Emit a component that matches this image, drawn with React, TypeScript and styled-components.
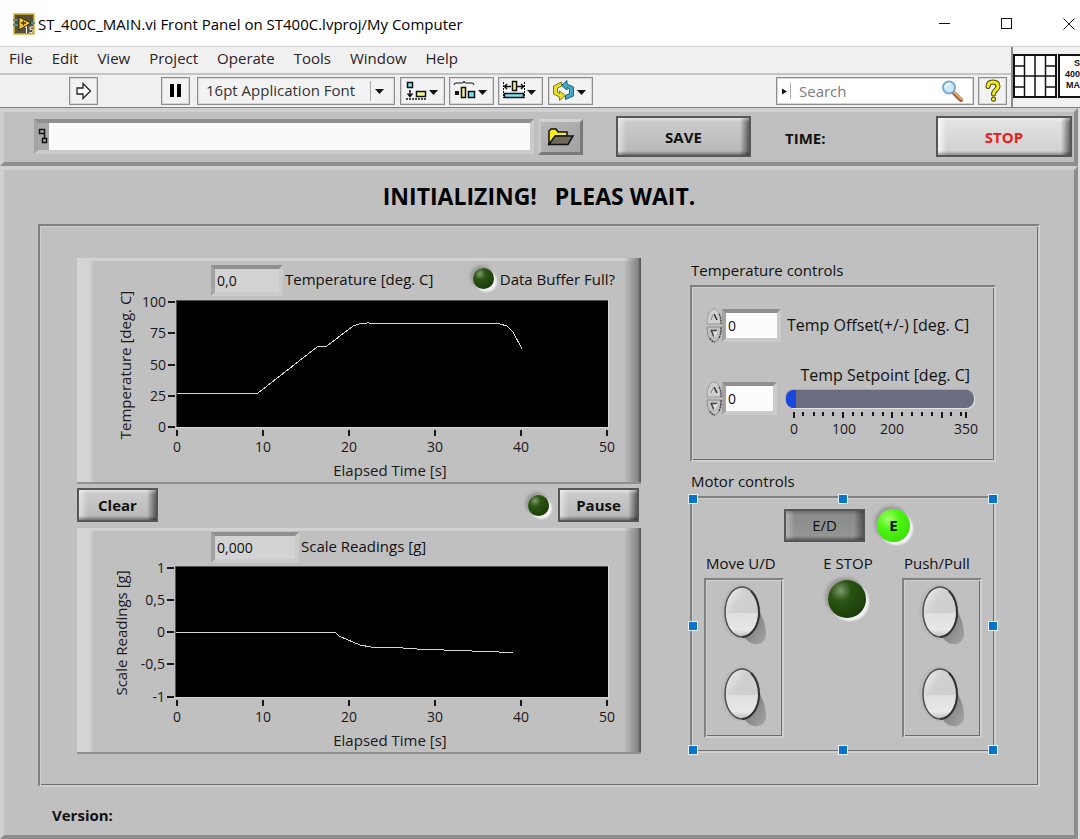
import React, { useState } from 'react';
import styled, { createGlobalStyle, css } from 'styled-components';

const GlobalStyle = createGlobalStyle`
  *, *::before, *::after { box-sizing: border-box; }
  body {
    margin: 0;
    background: #dcdcdc;
    color: #111;
    font: 15px/20px "Open Sans", "Noto Sans", sans-serif;
    overflow-x: hidden;
  }
  button, input, select { font: inherit; color: inherit; }
  h1, p { margin: 0; }
`;

/* ---------- window chrome ---------- */

const Window = styled.div`
  display: flex;
  flex-direction: column;
  min-height: 100vh;
  overflow: hidden;
`;

const TitleBar = styled.header`
  display: flex;
  align-items: center;
  height: 47px;
  padding: 2px 0 0 13px;
  background: #fff;
  border-bottom: 1px solid #d2d2d2;
  gap: 3px;
`;

const WindowTitle = styled.p`
  flex: 1;
  color: #000;
  white-space: nowrap;
`;

const WindowControls = styled.div`
  display: flex;
  gap: 40px;
`;

const PlainButton = styled.button`
  display: grid;
  place-items: center;
  padding: 0;
  border: 0;
  background: none;
`;

const ControlButton = styled(PlainButton)`
  width: 22px;
  height: 30px;
`;

const Chrome = styled.div`
  display: grid;
  grid-template-columns: 1fr 69px;
  background: #f0f0f0;
  border-bottom: 1px solid #7f7f7f;
`;

const MenuBar = styled.nav`
  display: flex;
  gap: 19px;
  height: 28px;
  padding: 1px 9px 0;
  border-bottom: 2px solid #c4c4c4;
`;

const MenuItem = styled(PlainButton)`
  height: 20px;
  color: #2a2226;
`;

const ToolBar = styled.div`
  display: flex;
  align-items: center;
  gap: 4px;
  height: 32px;
  padding: 0 4px 0 69px;
`;

const ToolGroup = styled.div<{ $before: number }>`
  display: flex;
  gap: 4px;
  margin-left: ${(p) => p.$before}px;
`;

const toolFrame = css`
  height: 28px;
  border: 1px solid #8e8e8e;
  box-shadow: inset 0 0 0 1px #d6d6d6;
`;

const ToolButton = styled(PlainButton)<{ $wide?: boolean }>`
  ${toolFrame}
  width: ${(p) => (p.$wide ? 45 : 29)}px;
  background: #f3f3f3;
`;

const FontPicker = styled.div`
  ${toolFrame}
  position: relative;
  width: 198px;
  background: #f3f3f3;
  select {
    width: 100%;
    height: 26px;
    padding: 0 30px 2px 8px;
    border: 0;
    background: none;
    appearance: none;
    color: #333;
  }
  svg {
    position: absolute;
    top: 3px;
    right: 7px;
    pointer-events: none;
  }
`;

const SearchBox = styled.label`
  ${toolFrame}
  display: flex;
  align-items: center;
  width: 198px;
  margin-left: auto;
  padding-right: 9px;
  background: #fff;
  svg { flex: none; }
  input {
    flex: 1;
    min-width: 0;
    height: 24px;
    padding: 0 0 0 5px;
    border: 0;
    background: none;
    outline: none;
  }
  input::placeholder { color: #7b7b7b; opacity: 1; }
`;

const Connector = styled.div`
  display: flex;
  align-items: flex-start;
  gap: 1px;
  padding-top: 7px;
  border-left: 2px solid #8c8c8c;
  > svg { flex: none; }
`;

const ViIcon = styled.div`
  flex: 1;
  height: 44px;
  padding-top: 2px;
  border: solid #111;
  border-width: 2px 0 2px 2px;
  background: #fff;
  font: bold 9px/11px "Liberation Sans", sans-serif;
  text-align: right;
`;

/* ---------- panels ---------- */

const raised = css`
  border: 4px solid;
  border-color: #d0d0d0 #8d8d8d #8d8d8d #d0d0d0;
`;

const PathStrip = styled.section`
  ${raised}
  display: flex;
  align-items: center;
  height: 58px;
  margin-right: 2px;
  padding: 0 2px 1px 30px;
  background: #bfbfbf;
`;

const sunken = css`
  border: 4px solid;
  border-color: #8f8f8f #cbcbcb #cbcbcb #a3a3a3;
`;

const PathField = styled.div`
  ${sunken}
  display: flex;
  flex: 1;
  height: 35px;
  background: #a9a9a9;
  svg { flex: none; }
  input {
    flex: 1;
    min-width: 0;
    padding: 0 4px;
    border: 0;
    background: #fafafa;
    outline: none;
  }
`;

const BrowseButton = styled(PlainButton)`
  width: 45px;
  height: 36px;
  margin-left: 4px;
  border: 3px solid;
  border-color: #d2d2d2 #7a7a7a #7a7a7a #c8c8c8;
  background: linear-gradient(135deg, #b8b8b8, #a2a2a2);
`;

const MetalButton = styled.button<{ $tone?: 'light' | 'dark'; $w: number; $h: number }>`
  width: ${(p) => p.$w}px;
  height: ${(p) => p.$h}px;
  padding: 0;
  border: 2px solid #565656;
  color: #111;
  font-weight: 700;
  background:
    linear-gradient(#ffffff66, #ffffff00) top / 100% 4px no-repeat,
    linear-gradient(#00000000, #00000066) bottom / 100% 4px no-repeat,
    linear-gradient(90deg, #ffffff80, #ffffff00) left / 9px 100% no-repeat,
    linear-gradient(90deg, #00000000, #00000088) right / 9px 100% no-repeat,
    linear-gradient(#cdcdcd, #b7b7b7);
  ${(p) =>
    p.$tone === 'light' &&
    css`
      color: #ec1c1c;
      background:
        linear-gradient(#ffffff66, #ffffff00) top / 100% 4px no-repeat,
        linear-gradient(#00000000, #00000055) bottom / 100% 4px no-repeat,
        linear-gradient(90deg, #ffffffcc, #ffffff00) left / 9px 100% no-repeat,
        linear-gradient(90deg, #00000000, #00000088) right / 9px 100% no-repeat,
        linear-gradient(#e4e4e4, #cfcfcf);
    `}
  ${(p) =>
    p.$tone === 'dark' &&
    css`
      font-weight: 400;
      background:
        linear-gradient(#00000033, #00000000) top / 100% 4px no-repeat,
        linear-gradient(#00000000, #00000066) bottom / 100% 4px no-repeat,
        linear-gradient(90deg, #ffffff55, #ffffff00) left / 9px 100% no-repeat,
        linear-gradient(90deg, #00000000, #00000066) right / 9px 100% no-repeat,
        linear-gradient(#8a8a8a, #969696);
    `}
`;

const SaveSlot = styled.div`
  margin-left: 33px;
`;

const TimeReadout = styled.p`
  width: 151px;
  margin: 2px 0 0 34px;
  font-weight: 700;
`;

const FrontPanel = styled.main`
  ${raised}
  flex: 1;
  margin-right: 2px;
  padding: 10px 34px 10px;
  background: #c0c0c0;
`;

const Banner = styled.h1`
  margin-bottom: 12px;
  color: #000;
  font-size: 23px;
  line-height: 32px;
  text-align: center;
  white-space: pre;
`;

const etched = css`
  border: 2px solid;
  border-color: #808080 #d0d0d0 #d0d0d0 #808080;
  box-shadow: inset 1px 1px #d0d0d0, inset -1px -1px #6c6c6c;
`;

const Workspace = styled.div`
  ${etched}
  display: grid;
  grid-template-columns: minmax(0, 1fr) 306px;
  gap: 49px;
  padding: 32px 42px 31px 37px;
`;

const Version = styled.p`
  margin: 18px 0 0 14px;
  font-weight: 700;
`;

/* ---------- charts ---------- */

const ChartPanel = styled.section`
  border-bottom: 2px solid #909090;
  background:
    linear-gradient(90deg, #d4d4d4 12px, #c0c0c000 17px) left / 17px 100% no-repeat,
    linear-gradient(90deg, #c0c0c000, #868686 14px, #585858 16px) right / 17px 100% no-repeat,
    linear-gradient(#d4d4d4, #cecece) top / 100% 3px no-repeat,
    #c0c0c0;
  > svg { display: block; width: 100%; height: auto; overflow: visible; }
`;

const ChartHeader = styled.div<{ $h: number }>`
  display: flex;
  align-items: flex-end;
  height: ${(p) => p.$h}px;
  padding: 0 26px 2px 134px;
`;

const Indicator = styled.output<{ $w: number }>`
  ${sunken}
  width: ${(p) => p.$w}px;
  height: 31px;
  padding-left: 2px;
  background: #d3d3d3;
  font-size: 14px;
  line-height: 24px;
`;

const ChartLabel = styled.label`
  padding: 0 0 7px 2px;
  white-space: nowrap;
`;

const LedLabel = styled.div`
  display: flex;
  align-items: center;
  gap: 6px;
  margin-left: auto;
  padding-bottom: 7px;
  white-space: nowrap;
`;

const Led = styled.span<{ $size: number; $on?: boolean }>`
  display: grid;
  flex: none;
  place-items: center;
  width: ${(p) => p.$size}px;
  height: ${(p) => p.$size}px;
  border-radius: 50%;
  font-weight: 700;
  background: ${(p) =>
    p.$on
      ? 'radial-gradient(circle at 35% 30%, #a4ff6a, #4cf512 35%, #3fe00c 75%, #2fa80c)'
      : 'radial-gradient(circle at 33% 28%, #7d9a6c, #2b5414 28%, #1f430c 65%, #122a06)'};
  box-shadow: 3px 3px 2px #f2f2f2, -2px -2px 3px 1px #9c9c9c, 0 0 0 3px #c4c4c4;
`;

const Actions = styled.div`
  display: flex;
  align-items: center;
  justify-content: space-between;
  height: 44px;
  padding: 0 2px 2px 0;
`;

const PauseGroup = styled.div`
  display: flex;
  align-items: center;
  gap: 9px;
`;

type Tick = [number, string];
type ChartProps = {
  height: number;
  left: number;
  bottom: number;
  top: number;
  xTicks: Tick[];
  yTicks: Tick[];
  xTitle: string;
  yTitle: string;
  yTitleX: number;
  line: string;
};

function Chart(p: ChartProps) {
  return (
    <svg viewBox={`0 0 564 ${p.height}`} role="img" aria-label={`${p.yTitle} over time`} fill="#1c181a">
      <rect x={p.left - 1} y={p.top - 1} width={533 - p.left} height={p.bottom - p.top + 2} fill="#d8d8d8" />
      <rect x={p.left - 1} y={p.top - 1} width={532 - p.left} height={p.bottom - p.top + 1} fill="#555" />
      <rect x={p.left} y={p.top} width={531 - p.left} height={p.bottom - p.top} fill="#000" />
      <polyline points={p.line} fill="none" stroke="#d6d6d0" strokeWidth="1" shapeRendering="crispEdges" />
      {p.yTicks.map(([y, text]) => (
        <g key={text}>
          <rect x={p.left - 9} y={y - 1} width="7" height="2" />
          <text x={p.left - 11} y={y + 5} fontSize="14" textAnchor="end">{text}</text>
        </g>
      ))}
      {p.xTicks.map(([x, text]) => (
        <g key={text}>
          <rect x={x - 1} y={p.bottom + 3} width="2" height="6" />
          <text x={x} y={p.bottom + 25} fontSize="14" textAnchor="middle">{text}</text>
        </g>
      ))}
      <text x="313" y={p.bottom + 49} fontSize="15" textAnchor="middle">{p.xTitle}</text>
      <text
        transform={`translate(${p.yTitleX} ${(p.top + p.bottom) / 2 + 1}) rotate(-90)`}
        fontSize="15"
        textAnchor="middle"
      >
        {p.yTitle}
      </text>
    </svg>
  );
}

const xTicks: Tick[] = [[100, '0'], [186, '10'], [272, '20'], [358, '30'], [444, '40'], [530, '50']];

/* ---------- right column ---------- */

const Controls = styled.div`
  display: flex;
  flex-direction: column;
  padding-top: 2px;
`;

const GroupTitle = styled.p`
  margin-bottom: 5px;
  padding-left: 1px;
`;

const TempBox = styled.div`
  ${etched}
  display: flex;
  flex-direction: column;
  gap: 22px;
  height: 177px;
  margin-bottom: 9px;
  padding: 21px 14px 0;
`;

const ControlRow = styled.div`
  display: flex;
  align-items: flex-start;
`;

const Numeric = styled.div<{ $w: number; $drop?: boolean }>`
  display: flex;
  align-items: center;
  height: 35px;
  margin-top: ${(p) => (p.$drop ? 16 : 0)}px;
  svg { flex: none; }
  input {
    ${sunken}
    width: ${(p) => p.$w}px;
    height: 33px;
    padding: 0 0 0 2px;
    border-radius: 0;
    background: #fcfcfc;
    font-size: 14px;
    outline: none;
  }
`;

const RowLabel = styled.label`
  padding: 7px 0 0 6px;
  font-size: 16px;
  white-space: nowrap;
`;

const SliderColumn = styled.div`
  display: flex;
  flex: 1;
  flex-direction: column;
  margin-left: 9px;
  label { margin-right: 10px; font-size: 16px; text-align: right; white-space: nowrap; }
  svg { display: block; width: 100%; }
`;

const Slider = styled.input`
  width: calc(100% - 6px);
  height: 18px;
  margin: 5px 0 3px;
  appearance: none;
  border-radius: 8px;
  background: #6b6b82;
  box-shadow: 1px 1px #e2e2e2, -1px -1px #a9a9a9;
  overflow: hidden;
  outline: none;
  &::-webkit-slider-thumb {
    appearance: none;
    width: 10px;
    height: 18px;
    background: #1747dd;
  }
`;

const MotorBox = styled.div`
  ${etched}
  position: relative;
  height: 257px;
  padding: 7px 12px 0 12px;
`;

const Handle = styled.i<{ $h: 'l' | 'c' | 'r'; $v: 't' | 'c' | 'b' }>`
  position: absolute;
  width: 10px;
  height: 10px;
  border: 1px solid #e8f2fa;
  background: #0a74cc;
  ${(p) => ({ l: 'left: -4px;', c: 'left: calc(50% - 5px);', r: 'right: -4px;' })[p.$h]}
  ${(p) => ({ t: 'top: -4px;', c: 'top: calc(50% - 4px);', b: 'bottom: -4px;' })[p.$v]}
`;

const EnableRow = styled.div`
  display: flex;
  align-items: center;
  gap: 12px;
  height: 40px;
  margin-bottom: 8px;
  padding-left: 80px;
`;

const MotorColumns = styled.div`
  display: grid;
  grid-template-columns: 80px 1fr 80px;
`;

const MotorColumn = styled.div<{ $center?: boolean }>`
  display: flex;
  flex-direction: column;
  align-items: ${(p) => (p.$center ? 'center' : 'flex-start')};
  gap: ${(p) => (p.$center ? 7 : 5)}px;
  padding-left: ${(p) => (p.$center ? 8 : 0)}px;
  white-space: nowrap;
`;

const MotorLabel = styled.span`
  padding-left: 2px;
`;

const ButtonPair = styled.div`
  ${etched}
  display: flex;
  flex-direction: column;
  align-items: center;
  gap: 12px;
  width: 80px;
  height: 160px;
  padding-top: 2px;
`;

const OvalButton = styled(PlainButton)`
  width: 56px;
  height: 70px;
`;

function Oval({ label }: { label: string }) {
  return (
    <OvalButton aria-label={label}>
      <svg width="56" height="70" viewBox="0 0 56 70">
        <defs>
          <linearGradient id="ovalTop" x1="0" y1="0" x2="1" y2="1">
            <stop offset="0" stopColor="#f4f4f4" />
            <stop offset="0.35" stopColor="#d0d0d0" />
            <stop offset="1" stopColor="#cccccc" />
          </linearGradient>
          <linearGradient id="ovalBottom" x1="0" y1="0" x2="0" y2="1">
            <stop offset="0" stopColor="#dedede" />
            <stop offset="0.7" stopColor="#e8e8e8" />
            <stop offset="1" stopColor="#bcbcbc" />
          </linearGradient>
          <linearGradient id="ovalShade" x1="0" y1="0" x2="1" y2="1">
            <stop offset="0.3" stopColor="#7c7c7c" />
            <stop offset="1" stopColor="#a6a6a6" />
          </linearGradient>
        </defs>
        <ellipse cx="25" cy="30" rx="20" ry="28" fill="#b9b9b9" />
        <path d="M42 26C46 34 50 42 50 52C50 59 45 63 38 62C32 61 28 56 27 50Z" fill="url(#ovalShade)" />
        <ellipse cx="26" cy="30" rx="17" ry="25" fill="url(#ovalTop)" />
        <path d="M9 31H43C43 44 35 55 26 55S9 44 9 31Z" fill="url(#ovalBottom)" />
        <ellipse cx="26" cy="30" rx="17" ry="25" fill="none" stroke="#4e4e4e" strokeWidth="1.5" />
        <path d="M35 9C41 15 43 23 43 31C43 44 35 55 26 55" fill="none" stroke="#333" strokeWidth="2" />
      </svg>
    </OvalButton>
  );
}

function Spinner() {
  return (
    <svg width="16" height="35" viewBox="0 0 16 35" aria-hidden="true">
      <path d="M1 16C1 7 4 1 8 1S15 7 15 16Z" fill="#cfcfcf" stroke="#9a9a9a" />
      <path d="M1 19C1 28 4 34 8 34S15 28 15 19Z" fill="#c2c2c2" stroke="#8c8c8c" />
      <path d="M13 6C15 9 15 12 15 16M13 30C15 26 15 23 15 19M4 30Q6 34 9 34" fill="none" stroke="#4c4c4c" strokeWidth="1.5" strokeDasharray="2 1" />
      <path d="M5 12L8 6" stroke="#fff" />
      <path d="M8 6L11 12" fill="none" stroke="#333" strokeWidth="1.5" />
      <path d="M5 12L7 7" stroke="#777" />
      <path d="M5 22H11L8 29Z" fill="#d8d8d8" />
      <path d="M5 22.500H11M5 22L8 29" fill="none" stroke="#444" strokeWidth="1.5" />
      <path d="M11 23L8 29" stroke="#f4f4f4" />
    </svg>
  );
}

/* ---------- toolbar drawings ---------- */

const Caret = ({ x = 34 }: { x?: number }) => <path d={`M${x - 4} 12h9l-4.500 5z`} fill="#111" />;

const LabViewIcon = () => (
  <svg width="22" height="22" viewBox="0 0 22 22" aria-hidden="true">
    <rect x="1" y="1" width="20" height="20" fill="#57503a" stroke="#e0b32c" strokeWidth="1.5" />
    <path d="M0 7h5M0 12h5M18 10h4" stroke="#4d8f9c" strokeWidth="2" />
    <path d="M6 4l12 6-12 7z" fill="#f6c934" stroke="#2a2410" />
    <path d="M8 10h5M10.500 7.500v5" stroke="#4c3a06" strokeWidth="1.3" />
    <path d="M12 14.500l1.500-1V20M20 14h-3v2.500c2-.5 3.200.2 3.200 1.500S19 20 16.500 19.500" stroke="#fff" fill="none" />
  </svg>
);

const AlignIcon = () => (
  <svg width="43" height="26" viewBox="0 0 43 26" aria-hidden="true">
    <rect x="6.500" y="4.500" width="5" height="5" fill="#7fe0f5" stroke="#111" strokeWidth="1.5" />
    <path d="M9 12v6M6.500 15.500L9 18.500l2.500-3" stroke="#111" strokeWidth="1.5" fill="none" />
    <path d="M5 21h21" stroke="#111" strokeWidth="1.5" strokeDasharray="2 1" />
    <rect x="15.500" y="13.500" width="9" height="5" fill="#f5f39a" stroke="#111" strokeWidth="1.5" />
    <Caret x={32} />
  </svg>
);

const DistributeIcon = () => (
  <svg width="43" height="26" viewBox="0 0 43 26" aria-hidden="true">
    <path d="M4 7q0-2 2-2h6q2 0 2-2q0 2 2 2h6q2 0 2 2" stroke="#111" fill="none" />
    <rect x="5" y="13" width="4" height="4" fill="#111" />
    <rect x="11.500" y="9.500" width="4" height="10" fill="#f5f39a" stroke="#111" strokeWidth="1.5" />
    <rect x="18.500" y="13.500" width="6" height="6" fill="#7fe0f5" stroke="#111" strokeWidth="1.5" />
    <Caret x={32} />
  </svg>
);

const ResizeIcon = () => (
  <svg width="43" height="26" viewBox="0 0 43 26" aria-hidden="true">
    <path d="M4.500 4v16M25.500 4v16" stroke="#111" strokeDasharray="2 1" />
    <path d="M6 8.500h6M18 8.500h6M8 6L5.500 8.500 8 11M22 6l2.500 2.500L22 11" stroke="#111" strokeWidth="1.5" fill="none" />
    <rect x="13.500" y="3.500" width="4" height="9" fill="#f5f39a" stroke="#111" strokeWidth="1.5" />
    <rect x="5.500" y="15.500" width="19" height="4" fill="#7fe0f5" stroke="#111" strokeWidth="1.5" />
    <Caret x={32} />
  </svg>
);

const ReorderIcon = () => (
  <svg width="43" height="26" viewBox="0 0 43 26" aria-hidden="true">
    <path d="M12.500 4L4.500 8v8l6 3v3.500l6-5-6-4.500v2.500L8.500 14V10l4-2z" fill="#e8dc2e" stroke="#867c14" />
    <path d="M16.500 21.500l8-3.500V9l-6.500-3V2.500l-5.500 5L18 12V9.500l2.500 1.500v4.500l-4 2z" fill="#42a9c4" stroke="#1d6478" />
    <Caret x={32} />
  </svg>
);

const Magnifier = () => (
  <svg width="24" height="24" viewBox="0 0 24 24" aria-hidden="true">
    <path d="M14 14l7 7" stroke="#9a6238" strokeWidth="4" strokeLinecap="round" />
    <path d="M14.500 13.500l6.500 6.500" stroke="#e7a565" strokeWidth="2" strokeLinecap="round" />
    <circle cx="9" cy="8.500" r="6" fill="#cdeafc" stroke="#7fa9cf" strokeWidth="2" />
    <path d="M5 8.500q1-4 5-4" stroke="#fff" strokeWidth="1.5" fill="none" />
  </svg>
);

const HelpIcon = () => (
  <svg width="20" height="24" viewBox="0 0 20 24" aria-hidden="true">
    <g fill="none" strokeLinecap="round">
      <path d="M5 7.500C5 4.500 7 3 10 3s5 1.500 5 4.500c0 3.500-4.500 3.500-4.500 7.500" stroke="#4d470a" strokeWidth="5" />
      <path d="M10.500 20v.2" stroke="#4d470a" strokeWidth="5" />
      <path d="M5 7.500C5 4.500 7 3 10 3s5 1.500 5 4.500c0 3.500-4.500 3.500-4.500 7.500" stroke="#f4ea22" strokeWidth="3" />
      <path d="M10.500 20v.2" stroke="#f4ea22" strokeWidth="3" />
    </g>
  </svg>
);

const TerminalGrid = () => (
  <svg width="44" height="44" viewBox="0 0 44 44" aria-hidden="true">
    <rect x="1" y="1" width="42" height="42" fill="#fff" stroke="#111" strokeWidth="2" />
    <path d="M11.500 1v42M22 1v42M32.500 1v42M1 22h42M1 12h10.500M1 33h10.500M32.500 12H43M32.500 33H43" stroke="#111" strokeWidth="1.5" />
  </svg>
);

const Folder = () => (
  <svg width="28" height="20" viewBox="0 0 28 20" aria-hidden="true">
    <path d="M2 17V4l2-2h5l2 3h9v4H9z" fill="#f6ee1e" stroke="#111" strokeWidth="1.5" />
    <path d="M2 17.500L8 9h18l-5 8.500z" fill="#6f6b5a" stroke="#111" strokeWidth="1.5" />
  </svg>
);

const minorTicks = [17, 28, 37, 47, 67, 76, 87, 97, 116, 126, 136, 146, 165, 175];
const majorTicks = [8, 57, 106, 156, 180];

export default function App() {
  const [setpoint, setSetpoint] = useState('0');
  return (
    <Window>
      <GlobalStyle />
      <TitleBar>
        <LabViewIcon />
        <WindowTitle>ST_400C_MAIN.vi Front Panel on ST400C.lvproj/My Computer</WindowTitle>
        <WindowControls>
          <ControlButton aria-label="Minimize">
            <svg width="12" height="12"><path d="M0 5.500h11" stroke="#111" /></svg>
          </ControlButton>
          <ControlButton aria-label="Maximize">
            <svg width="12" height="12"><rect x="0.500" y="0.500" width="10" height="10" fill="none" stroke="#111" /></svg>
          </ControlButton>
          <ControlButton aria-label="Close">
            <svg width="12" height="12"><path d="M0.500 0.500l11 11M11.500 0.500l-11 11" stroke="#111" /></svg>
          </ControlButton>
        </WindowControls>
      </TitleBar>

      <Chrome>
        <div>
          <MenuBar>
            {['File', 'Edit', 'View', 'Project', 'Operate', 'Tools', 'Window', 'Help'].map((m) => (
              <MenuItem key={m}>{m}</MenuItem>
            ))}
          </MenuBar>
          <ToolBar>
            <ToolButton aria-label="Run">
              <svg width="18" height="20" viewBox="0 0 18 20">
                <path d="M2 7h6V2.500l7.500 7.500L8 17.500V13H2z" fill="#fff" stroke="#222" strokeWidth="1.3" />
              </svg>
            </ToolButton>
            <ToolGroup $before={59}>
              <ToolButton aria-label="Pause execution">
                <svg width="14" height="14"><path d="M1 0h4v13H1zM8 0h4v13H8z" fill="#000" /></svg>
              </ToolButton>
            </ToolGroup>
            <ToolGroup $before={3}>
              <FontPicker>
                <select aria-label="Text settings">
                  <option>16pt Application Font</option>
                </select>
                <svg width="20" height="20">
                  <path d="M3.500 0v20" stroke="#aaa" />
                  <path d="M8 8h9l-4.500 5z" fill="#111" />
                </svg>
              </FontPicker>
            </ToolGroup>
            <ToolGroup $before={1}>
              <ToolButton $wide aria-label="Align objects"><AlignIcon /></ToolButton>
              <ToolButton $wide aria-label="Distribute objects"><DistributeIcon /></ToolButton>
              <ToolButton $wide aria-label="Resize objects"><ResizeIcon /></ToolButton>
            </ToolGroup>
            <ToolGroup $before={1}>
              <ToolButton $wide aria-label="Reorder"><ReorderIcon /></ToolButton>
            </ToolGroup>
            <SearchBox>
              <svg width="17" height="24" aria-hidden="true">
                <path d="M5 9.500v6l5-3z" fill="#111" />
                <path d="M13.500 4v16" stroke="#aaa" />
              </svg>
              <input placeholder="Search" aria-label="Search" />
              <Magnifier />
            </SearchBox>
            <ToolButton aria-label="Context help"><HelpIcon /></ToolButton>
          </ToolBar>
        </div>
        <Connector>
          <TerminalGrid />
          <ViIcon>
            S<br />400<br />MA
          </ViIcon>
        </Connector>
      </Chrome>

      <PathStrip>
        <PathField>
          <svg width="11" height="27" aria-hidden="true">
            <path d="M1.500 6.500h5v4h-5zM4.500 15.500h4v4h-4zM6.500 10.500v5" fill="none" stroke="#111" strokeWidth="1.5" />
          </svg>
          <input aria-label="File path" />
        </PathField>
        <BrowseButton aria-label="Browse"><Folder /></BrowseButton>
        <SaveSlot>
          <MetalButton $w={135} $h={41}>SAVE</MetalButton>
        </SaveSlot>
        <TimeReadout>TIME:</TimeReadout>
        <MetalButton $w={136} $h={41} $tone="light">STOP</MetalButton>
      </PathStrip>

      <FrontPanel>
        <Banner>{'INITIALIZING!   PLEAS WAIT.'}</Banner>
        <Workspace>
          <div>
            <ChartPanel>
              <ChartHeader $h={40}>
                <Indicator id="temp" $w={72}>0,0</Indicator>
                <ChartLabel htmlFor="temp">Temperature [deg. C]</ChartLabel>
                <LedLabel>
                  <Led $size={21} />
                  Data Buffer Full?
                </LedLabel>
              </ChartHeader>
              <Chart
                height={184}
                left={100}
                top={3}
                bottom={129}
                xTicks={xTicks}
                yTicks={[[4, '100'], [35, '75'], [67, '50'], [98, '25'], [129, '0']]}
                xTitle="Elapsed Time [s]"
                yTitle="Temperature [deg. C]"
                yTitleX={54}
                line="100,95 181,95 240,49 250,48 276,28 282,26 290,25 423,26 430,28 436,34 445,51"
              />
            </ChartPanel>
            <Actions>
              <MetalButton $w={81} $h={34}>Clear</MetalButton>
              <PauseGroup>
                <Led $size={21} />
                <MetalButton $w={81} $h={34}>Pause</MetalButton>
              </PauseGroup>
            </Actions>
            <ChartPanel>
              <ChartHeader $h={37}>
                <Indicator id="scale" $w={88}>0,000</Indicator>
                <ChartLabel htmlFor="scale">Scale Readings [g]</ChartLabel>
              </ChartHeader>
              <Chart
                height={187}
                left={99}
                top={2}
                bottom={132}
                xTicks={xTicks}
                yTicks={[[3, '1'], [35, '0,5'], [67, '0'], [99, '-0,5'], [132, '-1']]}
                xTitle="Elapsed Time [s]"
                yTitle="Scale Readings [g]"
                yTitleX={50}
                line="99,67 258,67 262,71 271,75 283,80 294,82 311,82 340,84 367,85 395,86 422,87 436,88"
              />
            </ChartPanel>
          </div>

          <Controls>
            <GroupTitle>Temperature controls</GroupTitle>
            <TempBox>
              <ControlRow>
                <Numeric $w={59}>
                  <Spinner />
                  <input id="offset" defaultValue="0" />
                </Numeric>
                <RowLabel htmlFor="offset">Temp Offset(+/-) [deg. C]</RowLabel>
              </ControlRow>
              <ControlRow>
                <Numeric $w={55} $drop>
                  <Spinner />
                  <input
                    aria-label="Temp Setpoint value"
                    value={setpoint}
                    onChange={(e) => setSetpoint(e.target.value)}
                  />
                </Numeric>
                <SliderColumn>
                  <label htmlFor="setpoint">Temp Setpoint [deg. C]</label>
                  <Slider
                    id="setpoint"
                    type="range"
                    min="0"
                    max="350"
                    value={Number(setpoint) || 0}
                    onChange={(e) => setSetpoint(e.target.value)}
                  />
                  <svg viewBox="0 0 194 30" fill="#1c181a" fontSize="14" textAnchor="middle" aria-hidden="true">
                    {minorTicks.map((x) => <rect key={x} x={x - 1} y="1" width="2" height="4" />)}
                    {majorTicks.map((x) => <rect key={x} x={x - 1} y="1" width="2" height="6" />)}
                    <text x="8" y="23">0</text>
                    <text x="58" y="23">100</text>
                    <text x="106" y="23">200</text>
                    <text x="180" y="23">350</text>
                  </svg>
                </SliderColumn>
              </ControlRow>
            </TempBox>

            <GroupTitle>Motor controls</GroupTitle>
            <MotorBox>
              <EnableRow>
                <MetalButton $w={81} $h={33} $tone="dark">E/D</MetalButton>
                <Led $size={33} $on>E</Led>
              </EnableRow>
              <MotorColumns>
                <MotorColumn>
                  <MotorLabel>Move U/D</MotorLabel>
                  <ButtonPair>
                    <Oval label="Move up" />
                    <Oval label="Move down" />
                  </ButtonPair>
                </MotorColumn>
                <MotorColumn $center>
                  <MotorLabel>E STOP</MotorLabel>
                  <Led $size={38} />
                </MotorColumn>
                <MotorColumn>
                  <MotorLabel>Push/Pull</MotorLabel>
                  <ButtonPair>
                    <Oval label="Push" />
                    <Oval label="Pull" />
                  </ButtonPair>
                </MotorColumn>
              </MotorColumns>
              <Handle $h="l" $v="t" />
              <Handle $h="c" $v="t" />
              <Handle $h="r" $v="t" />
              <Handle $h="l" $v="c" />
              <Handle $h="r" $v="c" />
              <Handle $h="l" $v="b" />
              <Handle $h="c" $v="b" />
              <Handle $h="r" $v="b" />
            </MotorBox>
          </Controls>
        </Workspace>
        <Version>Version:</Version>
      </FrontPanel>
    </Window>
  );
}
